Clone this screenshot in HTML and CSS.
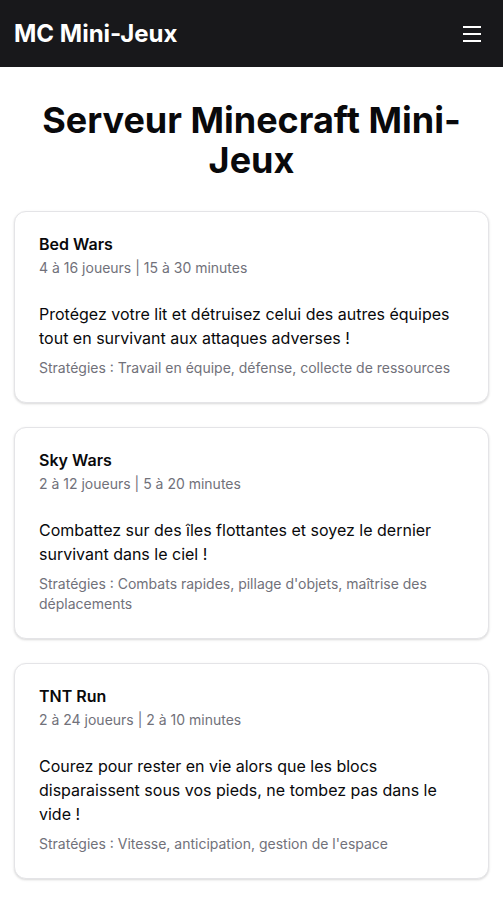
FILE: index.html
```html
<!DOCTYPE html>
<html lang="fr">
<head>
<meta charset="utf-8">
<title>MC Mini-Jeux</title>
<link rel="stylesheet" href="styles.css">
</head>
<body>
<header class="topbar">
  <div class="brand">MC Mini-Jeux</div>
  <button class="menu" aria-label="Menu">
    <svg width="20" height="18" viewBox="0 0 20 18" fill="none" stroke="#fff" stroke-width="2" stroke-linecap="butt">
      <line x1="1" y1="2" x2="19" y2="2"/>
      <line x1="1" y1="9" x2="19" y2="9"/>
      <line x1="1" y1="16" x2="19" y2="16"/>
    </svg>
  </button>
</header>
<main class="main">
  <h1 class="page-title">Serveur Minecraft Mini-Jeux</h1>
  <div class="cards">
    <article class="card">
      <div class="card-header">
        <h2 class="card-title">Bed Wars</h2>
        <p class="card-desc">4 à 16 joueurs | 15 à 30 minutes</p>
      </div>
      <div class="card-content">
        <p class="card-text">Protégez votre lit et détruisez celui des autres équipes tout en survivant aux attaques adverses !</p>
        <p class="card-strat">Stratégies : Travail en équipe, défense, collecte de ressources</p>
      </div>
    </article>
    <article class="card">
      <div class="card-header">
        <h2 class="card-title">Sky Wars</h2>
        <p class="card-desc">2 à 12 joueurs | 5 à 20 minutes</p>
      </div>
      <div class="card-content">
        <p class="card-text">Combattez sur des îles flottantes et soyez le dernier survivant dans le ciel !</p>
        <p class="card-strat">Stratégies : Combats rapides, pillage d'objets, maîtrise des déplacements</p>
      </div>
    </article>
    <article class="card">
      <div class="card-header">
        <h2 class="card-title">TNT Run</h2>
        <p class="card-desc">2 à 24 joueurs | 2 à 10 minutes</p>
      </div>
      <div class="card-content">
        <p class="card-text">Courez pour rester en vie alors que les blocs disparaissent sous vos pieds, ne tombez pas dans le vide !</p>
        <p class="card-strat">Stratégies : Vitesse, anticipation, gestion de l'espace</p>
      </div>
    </article>
  </div>
</main>
</body>
</html>
```
FILE: styles.css
```css
* { box-sizing: border-box; }
html, body { margin: 0; padding: 0; }
body {
  font-family: Inter, "Noto Sans", sans-serif;
  background: #fff;
  color: #09090b;
}
.topbar {
  height: 67px;
  background: #18181b;
  display: flex;
  align-items: center;
  justify-content: space-between;
  padding: 0 14px;
}
.brand {
  color: #fff;
  font-size: 24px;
  font-weight: 700;
  line-height: 32px;
}
.menu {
  background: none;
  border: 0;
  padding: 0;
  margin-right: 7px;
  display: flex;
  cursor: pointer;
}
.main {
  padding: 33px 14px 20px;
}
.page-title {
  margin: 0 0 31px;
  font-size: 36px;
  line-height: 40px;
  font-weight: 700;
  text-align: center;
  color: #09090b;
}
.cards {
  display: flex;
  flex-direction: column;
  gap: 24px;
}
.card {
  border: 1px solid #e4e4e7;
  border-radius: 12px;
  background: #fff;
  box-shadow: 0 1px 3px rgba(0,0,0,0.1), 0 1px 2px rgba(0,0,0,0.06);
}
.card-header {
  padding: 24px;
  display: flex;
  flex-direction: column;
  gap: 6px;
}
.card-title {
  margin: 0;
  font-size: 16px;
  line-height: 16px;
  font-weight: 600;
  color: #09090b;
}
.card-desc {
  margin: 0;
  font-size: 14px;
  line-height: 20px;
  color: #71717a;
}
.card-content {
  padding: 0 24px 24px;
}
.card-text {
  margin: 0;
  font-size: 16px;
  line-height: 24px;
  color: #09090b;
}
.card-strat {
  margin: 8px 0 0;
  font-size: 14px;
  line-height: 20px;
  color: #71717a;
}
```
